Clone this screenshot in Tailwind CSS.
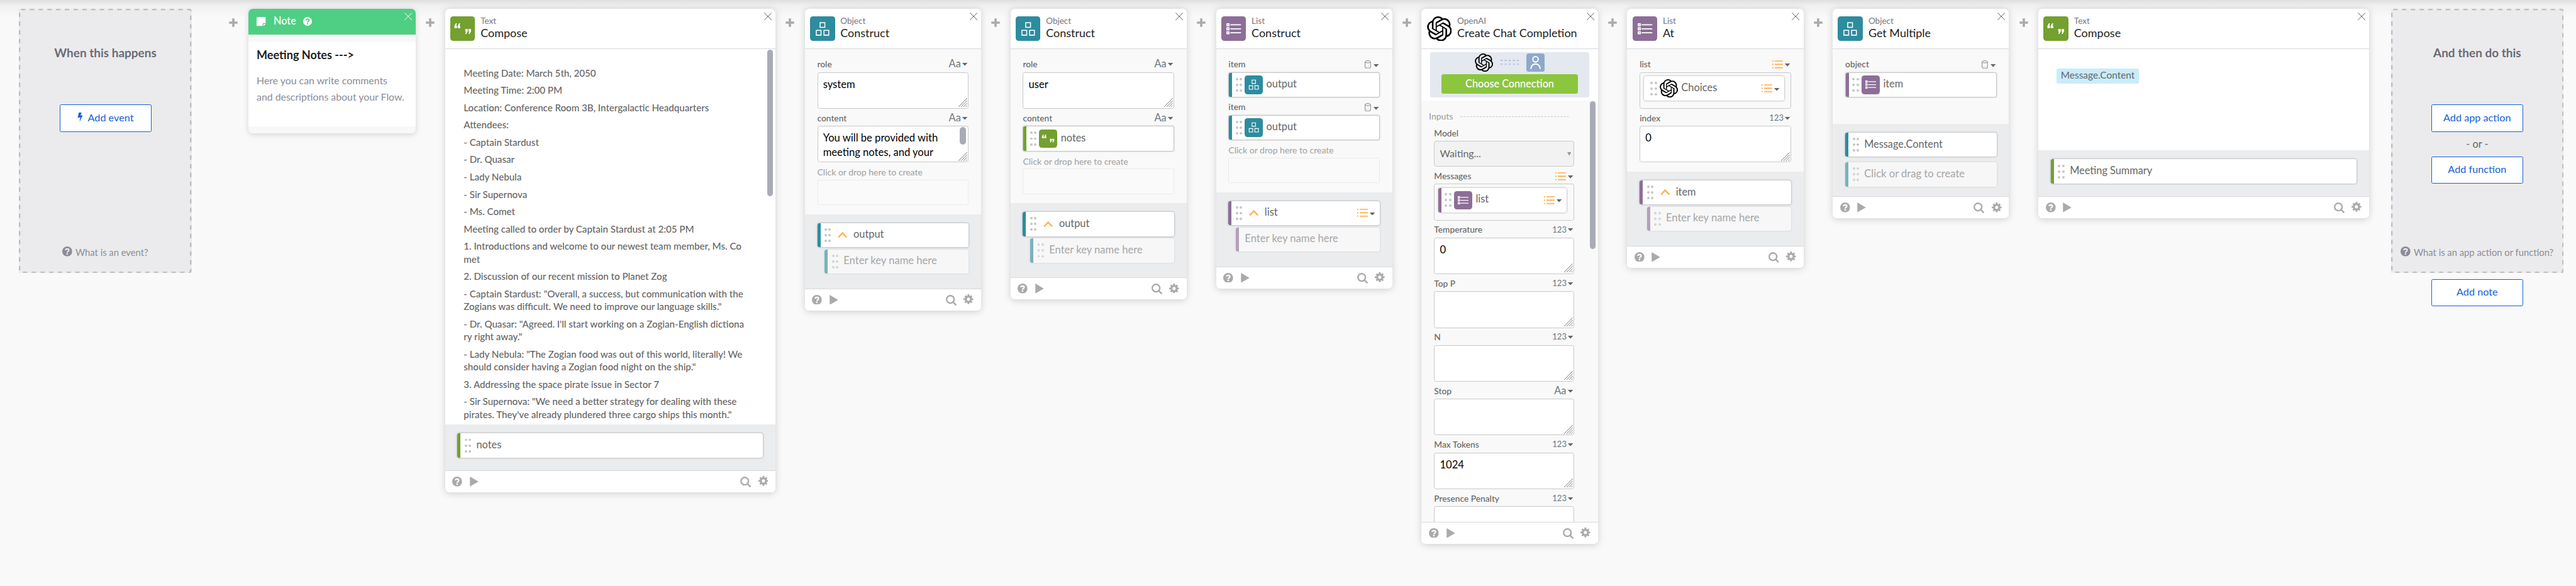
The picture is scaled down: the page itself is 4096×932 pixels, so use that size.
<!DOCTYPE html>
<html lang="en">
<head>
<meta charset="utf-8">
<title>Flow editor</title>
<script src="https://cdn.jsdelivr.net/npm/@tailwindcss/browser@4"></script>
</head>
<body class="bg-[#f9f9f9] overflow-hidden">

<svg class="hidden">
  <symbol id="plus" viewBox="0 0 12 12"><path d="M6 1.8v8.4M1.8 6h8.4" stroke="currentColor" stroke-width="3.1" stroke-linecap="square" stroke-linejoin="round"/></symbol>
  <symbol id="x" viewBox="0 0 11 11"><path d="M.3.3l10.4 10.4M10.7.3L.3 10.7" stroke="currentColor" stroke-width=".85"/></symbol>
  <symbol id="help" viewBox="0 0 16 16"><circle cx="8" cy="8" r="8" fill="currentColor"/><path class="stroke-(--hole)" d="M5.3 6.1C5.5 3.2 10.7 3.2 10.7 6.1 10.7 8 8 8 8 9.9" fill="none" stroke-width="2.1"/><path class="stroke-(--hole)" d="M8 11v2.3" stroke-width="2.4"/></symbol>
  <symbol id="play" viewBox="0 0 12 14"><path d="M0 0l12 7L0 14z" fill="currentColor"/></symbol>
  <symbol id="search" viewBox="0 0 29 29"><circle cx="12.3" cy="12.3" r="10.2" fill="none" stroke="currentColor" stroke-width="4"/><path d="M20 20l6.8 6.8" stroke="currentColor" stroke-width="4.4" stroke-linecap="round"/></symbol>
  <symbol id="gear" viewBox="0 0 16 16"><circle cx="8" cy="8" r="4.2" fill="none" stroke="currentColor" stroke-width="3.3"/><path d="M8 0v3.4M8 12.600v3.4M0 8h3.4M12.600 8H16M2.500 2.500l2.300 2.300M11.200 11.200l2.300 2.300M13.500 2.500l-2.300 2.300M4.800 11.200l-2.300 2.300" stroke="currentColor" stroke-width="3"/></symbol>
  <symbol id="text" viewBox="0 0 34 34"><path fill="#fff" d="M5.600 16v-3.100l1.900-3.500h1.500l-.9 3.400h1V16zM10.100 16v-3.100L12 9.400h1.500l-.9 3.400h1V16zM20.300 17.300h3.500v3.100l-1.900 3.500h-1.500l.9-3.400h-1zM24.800 17.300h3.500v3.100l-1.900 3.500h-1.500l.9-3.400h-1z"/></symbol>
  <symbol id="object" viewBox="0 0 34 34"><path fill="none" stroke="#fff" stroke-width="1.300" d="M13.700 8.500h6.500v6.500h-6.500zM8.500 19.100h6.500v6.500H8.500zM19 19.100h6.500v6.500H19z"/></symbol>
  <symbol id="list" viewBox="0 0 34 34"><path fill="none" stroke="#fff" stroke-width="1.500" d="M7.700 10.100h2.700v2.700H7.700zM7.700 15.600h2.700v2.700H7.700zM7.700 21h2.700v2.700H7.700zM12.100 11.500h14.700M12.100 17h14.700M12.100 22.400h14.700"/></symbol>
  <symbol id="openai" viewBox="0 0 24 24"><path d="M22.2819 9.8211a5.9847 5.9847 0 0 0-.5157-4.9108 6.0462 6.0462 0 0 0-6.5098-2.9A6.0651 6.0651 0 0 0 4.9807 4.1818a5.9847 5.9847 0 0 0-3.9977 2.9 6.0462 6.0462 0 0 0 .7427 7.0966 5.98 5.98 0 0 0 .511 4.9107 6.051 6.051 0 0 0 6.5146 2.9001A5.9847 5.9847 0 0 0 13.2599 24a6.0557 6.0557 0 0 0 5.7718-4.2058 5.9894 5.9894 0 0 0 3.9977-2.9001 6.0557 6.0557 0 0 0-.7475-7.0729zm-9.022 12.6081a4.4755 4.4755 0 0 1-2.8764-1.0408l.1419-.0804 4.7783-2.7582a.7948.7948 0 0 0 .3927-.6813v-6.7369l2.02 1.1686a.071.071 0 0 1 .038.052v5.5826a4.504 4.504 0 0 1-4.4945 4.4944zm-9.6607-4.1254a4.4708 4.4708 0 0 1-.5346-3.0137l.142.0852 4.783 2.7582a.7712.7712 0 0 0 .7806 0l5.8428-3.3685v2.3324a.0804.0804 0 0 1-.0332.0615L9.74 19.9502a4.4992 4.4992 0 0 1-6.1408-1.6464zM2.3408 7.8956a4.485 4.485 0 0 1 2.3655-1.9728V11.6a.7664.7664 0 0 0 .3879.6765l5.8144 3.3543-2.0201 1.1685a.0757.0757 0 0 1-.071 0l-4.8303-2.7865A4.504 4.504 0 0 1 2.3408 7.872zm16.5963 3.8558L13.1038 8.364 15.1192 7.2a.0757.0757 0 0 1 .071 0l4.8303 2.7913a4.4944 4.4944 0 0 1-.6765 8.1042v-5.6772a.79.79 0 0 0-.407-.667zm2.0107-3.0231l-.142-.0852-4.7735-2.7818a.7759.7759 0 0 0-.7854 0L9.409 9.2297V6.8974a.0662.0662 0 0 1 .0284-.0615l4.8303-2.7866a4.4992 4.4992 0 0 1 6.6802 4.66zM8.3065 12.863l-2.02-1.1638a.0804.0804 0 0 1-.038-.0567V6.0742a4.4992 4.4992 0 0 1 7.3757-3.4537l-.142.0805L8.704 5.459a.7948.7948 0 0 0-.3927.6813zm1.0976-2.3654l2.602-1.4998 2.6069 1.4998v2.9994l-2.5974 1.4997-2.6067-1.4997Z"/></symbol>
  <symbol id="caret" viewBox="0 0 7 4"><path d="M0 0h7L3.500 4z" fill="#666"/></symbol>
  <symbol id="lines" viewBox="0 0 29 22"><path d="M8 1.700h20M8 11h20M8 20.300h20" stroke="#ffab40" stroke-width="2.900" stroke-linecap="round"/><path d="M0 1.700h3M0 11h3M0 20.300h3" stroke="#ffab40" stroke-width="3.400"/></symbol>
  <symbol id="cylinder" viewBox="0 0 17 23"><g fill="none" stroke="#6b7883" stroke-width="1.500"><ellipse cx="8.500" cy="4" rx="7.500" ry="3"/><path d="M1 4v15c0 4 15 4 15 0V4"/><path d="M2 19c2-2.300 11-2.300 13 0" stroke-dasharray="1.200 1.200" stroke-width=".9"/></g></symbol>
  <symbol id="chevron" viewBox="0 0 13 8"><path d="M.9 7.200L6.500 1.300l5.600 5.900" fill="none" stroke="#ffab40" stroke-width="1.900"/></symbol>
  <symbol id="grip" viewBox="0 0 12 12"><path d="M0 12L11.800.2M3.300 12l8.500-8.500M6.600 12l5.200-5.200M9.800 12l2-2" stroke="#6f6f6f" stroke-width=".8"/></symbol>
  <symbol id="person" viewBox="0 0 25 25"><rect width="25" height="25" rx="3.500" fill="#8fa9ca"/><g fill="none" stroke="#fff" stroke-width="1.700"><circle cx="12.500" cy="8" r="3.700"/><path d="M6.200 21.300c0-9.300 12.600-9.300 12.600 0"/></g></symbol>
  <symbol id="sheet" viewBox="0 0 12 12"><path d="M1 0h10q1 0 1 1v7H9Q8 8 8 9v3H1q-1 0-1-1V1q0-1 1-1z" fill="#fff"/><path d="M9 9h3L9 12z" fill="#fff"/></symbol>
  <symbol id="bolt" viewBox="0 0 15 26"><path d="M4 0h7.500L8.600 8.200 15 6.800 6 26 8.200 13 1 14.600z" fill="currentColor"/></symbol>
</svg>

<div id="page" class="relative h-[798px] w-[3508px] overflow-hidden font-['Lato',sans-serif] text-[14px] text-[#666] whitespace-nowrap [zoom:1.16762]"></div>

<script>
const icon = (id, cls) => `<svg class="shrink-0 ${cls}"><use href="#${id}"/></svg>`;

const TILE = { text: 'bg-[#73a02f]', object: 'bg-[#2d8c9e]', list: 'bg-[#8d6e97]', openai: 'text-black' };
const bigTile = k => `<div class="size-[34px] shrink-0 rounded-[4px] ${TILE[k]}">${icon(k, 'block size-full')}</div>`;
const tile = k => `<div class="size-[25px] shrink-0 rounded-[4px] ${TILE[k]}">${icon(k, 'block size-full')}</div>`;

const dot = '<i class="size-[3.4px] rounded-full bg-[#c6c6c6]"></i>';
const dots = `<div class="grid w-[9px] shrink-0 grid-cols-2 justify-between gap-x-[2.200px] gap-y-[4.400px]">${dot.repeat(6)}</div>`;

const types = {
  text: '<span class="pb-[2px] text-[14px] text-[#6b7883] font-[\'Open_Sans\'] leading-none">Aa</span>' + icon('caret', 'ml-[2px] h-[4px] w-[7px]'),
  number: '<span class="pb-[1px] text-[11.200px] text-[#6b7883] font-[\'DejaVu_Sans_Mono\'] leading-none">123</span>' + icon('caret', 'ml-[1.500px] h-[4px] w-[7px]'),
  list: icon('lines', 'h-[11px] w-[14.5px]') + icon('caret', 'ml-[2.500px] mt-[2px] h-[4px] w-[7px]'),
  object: icon('cylinder', 'h-[11.5px] w-[8.5px]') + icon('caret', 'ml-[3.500px] mt-[3px] h-[4px] w-[7px]'),
};

const label = (t, type) => `<div class="flex h-[23.200px] items-center justify-between pt-[2.500px] pr-[1.500px]">
  <span class="text-[11.800px] font-medium">${t}</span>${type ? `<span class="flex items-center">${types[type]}</span>` : ''}</div>`;

const area = (t, scroll) => `<div class="relative h-[50px] overflow-hidden rounded-[3px] border border-[#c8c8c8] bg-white px-[7px] pt-[6px] text-[14.200px] leading-[19.500px] text-black">${t}
  ${scroll ? '<div class="absolute right-[3px] top-[1px] h-[24px] w-[8px] rounded-full bg-[#a9acb5]"></div>' : ''}
  ${icon('grip', 'absolute bottom-[1.500px] right-[1px] size-[12px]')}</div>`;

const BAR = { text: 'border-l-[#73a02f]', object: 'border-l-[#2d8c9e]', list: 'border-l-[#8d6e97]', none: 'border-l-white' };

const field = (bar, k, t) => `<div class="h-[35px] rounded-[3px] border border-[#c4c4c4] bg-white shadow-[0_0_2px_#0003]">
  <div class="flex h-full items-center rounded-l-[2px] border-l-[5px] pl-[4.500px] ${BAR[bar]}">${dots}<div class="ml-[3.500px]">${tile(k)}</div><span class="ml-[4.500px] pb-[3px] text-[14px]">${t}</span></div></div>`;

const create = () => `<div class="flex h-[23.200px] items-center pt-[3px] text-[12px] text-[#a0a0a0]">Click or drop here to create</div>
  <div class="h-[35px] rounded-[2px] border border-[#ebebeb] bg-[#fafafa]"></div>`;

const pill = (bar, inner, extra = '') => `<div class="flex h-[33px] items-center rounded-[3px] border-l-[5px] bg-white pl-[5.500px] shadow-[0_0_2.500px_#0006] ${BAR[bar]} ${extra}">${inner}</div>`;
const ghost = (bar, t, extra = '', grip = true) => `<div class="flex h-[33px] items-center rounded-[3px] border-l-[5px] bg-white pl-[5.500px] opacity-60 shadow-[0_0_2.500px_#0003] ${BAR[bar]} ${extra}">${grip ? dots : ''}<span class="pb-[2px] text-[14.200px] text-[#777] ${grip ? 'ml-[7px]' : 'ml-[2.500px]'}">${t}</span></div>`;
const plain = (bar, t) => pill(bar, `${dots}<span class="ml-[7px] pb-[2px] text-[14px]">${t}</span>`);
const parent = (bar, t, type) => pill(bar, `${dots}${icon('chevron', 'ml-[9px] h-[8px] w-[13px]')}<span class="ml-[8.500px] pb-[2px] text-[14px]">${t}</span>${type ? `<span class="ml-auto mr-[7px] flex items-center">${types[type]}</span>` : ''}`);
const nested = (k, t) => `<div class="h-[50px] rounded-[3px] border border-[#c8c8c8] p-[5px]"><div class="${k === 'list' ? 'w-[175px]' : 'w-[191px]'}">
  ${pill(k === 'list' ? 'list' : 'none', `<div class="ml-[-1px] flex items-center">${dots}</div><div class="ml-[3.500px]">${tile(k)}</div><span class="ml-[4.500px] pb-[3px] text-[14.100px]">${t}</span><span class="ml-auto mr-[7px] flex items-center">${types.list}</span>`)}</div></div>`;

const outputs = (html, pad) => `<div class="bg-[#ebecee] px-[17px] pt-[12px] ${pad}">${html}</div>`;
const footer = `<div class="relative flex h-[30px] shrink-0 items-center rounded-b-[6px] border-t border-[#d7d8dd] bg-white pl-[10px] pr-[10px] text-[#aaa] [--hole:#fff]">
  ${icon('help', 'size-[13.500px]')}${icon('play', 'ml-[10px] h-[13.500px] w-[12px]')}
  ${icon('search', 'ml-auto mt-[1px] size-[14.500px]')}${icon('gear', 'ml-[10px] mt-[-1px] size-[13.500px]')}</div>`;

const card = (k, sub, title, w, body) => `<section class="flex shrink-0 flex-col rounded-[6px] bg-white shadow-[0_1px_10px_#0000002b] ${w}">
  <header class="relative flex h-[55px] shrink-0 border-b border-[#d7d8dd] pl-[7px] pt-[10px]">
    ${bigTile(k)}
    <div class="-mt-[0.600px] ml-[7.500px]"><div class="text-[11.600px] leading-[15px] text-[#777582]">${sub}</div><div class="text-[15.400px] leading-[17px] text-[#1e1e22]">${title}</div></div>
    ${icon('x', 'absolute right-[5px] top-[5px] size-[10.500px] text-[#555]')}
  </header>${body}${footer}</section>`;

const plus = `<div class="flex w-10 shrink-0 justify-center pt-[13px] text-[#aaa]">${icon('plus', 'size-[12px]')}</div>`;
const form = html => `<div class="bg-[#f9f9f9] px-[17px] pb-[12.200px] pt-[8px]">${html}</div>`;

const dashed = html => `<div class="relative flex h-[360px] w-[235px] flex-col items-center bg-[#ebebed]">
  <svg class="absolute inset-0 size-full"><rect x="1" y="1" width="233" height="358" rx="2" fill="none" stroke="#bdbdbd" stroke-width="2" stroke-dasharray="6 5.900"/></svg>${html}</div>`;
const button = (t, extra = '') => `<div class="flex h-[37px] w-[125px] items-center justify-center rounded-[2px] border border-[#1560d8] bg-white pb-[2px] text-[13.900px] text-[#1560d8] ${extra}">${t}</div>`;
const helpLine = t => `<div class="absolute inset-x-0 top-[322px] flex items-center justify-center text-[12.650px] text-[#8c8c96] [--hole:#ebebed]">${icon('help', 'mr-[4px] mb-[2px] size-[13.500px]')}${t}</div>`;
const heading = t => `<h2 class="mt-[49px] text-[16.250px] leading-[22px] font-bold text-[#6b6b76]">${t}</h2>`;

const notes = ['Meeting Date: March 5th, 2050', 'Meeting Time: 2:00 PM', 'Location: Conference Room 3B, Intergalactic Headquarters', 'Attendees:', '- Captain Stardust', '- Dr. Quasar', '- Lady Nebula', '- Sir Supernova', '- Ms. Comet', 'Meeting called to order by Captain Stardust at 2:05 PM', '1. Introductions and welcome to our newest team member, Ms. Co<br>met', '2. Discussion of our recent mission to Planet Zog', '- Captain Stardust: "Overall, a success, but communication with the<br>Zogians was difficult. We need to improve our language skills."', '- Dr. Quasar: "Agreed. I\'ll start working on a Zogian-English dictiona<br>ry right away."', '- Lady Nebula: "The Zogian food was out of this world, literally! We<br>should consider having a Zogian food night on the ship."', '3. Addressing the space pirate issue in Sector 7', '- Sir Supernova: "We need a better strategy for dealing with these<br>pirates. They\'ve already plundered three cargo ships this month."'];

document.getElementById('page').innerHTML = `
<div class="absolute inset-x-0 top-0 h-[24px] bg-linear-to-b from-[#dedede] via-[#f0f0f0] via-30% to-[#f9f9f9]"></div>
<main class="relative flex items-start pl-[26px] pt-[12px]">
  ${dashed(`${heading('When this happens')}${button(icon('bolt', 'mr-[7px] h-[13px] w-[7.500px]') + 'Add event', 'mt-[59.500px]')}${helpLine('What is an event?')}`)}
  <div class="w-[37px] shrink-0"></div>${plus}
  <section class="h-[170px] w-[228px] shrink-0 overflow-hidden rounded-[6px] bg-[#f8f8f8] shadow-[0_1px_8px_#00000026]">
    <header class="relative flex h-[35px] items-center bg-[#4ecf84] pl-[11.500px] text-white [--hole:#4ecf84]">${icon('sheet', 'size-[12.500px]')}
      <span class="ml-[10.500px] pb-[2px] text-[14px] font-medium">Note</span>${icon('help', 'mb-[1px] ml-[10px] size-[12px]')}
      ${icon('x', 'absolute right-[5px] top-[5px] size-[10.500px]')}</header>
    <div class="mt-[10px] h-[115px] bg-white px-[11.500px] pt-[8px]">
      <h3 class="text-[15.500px] leading-[20px] font-bold text-[#1e1e20]">Meeting Notes ---&gt;</h3>
      <p class="mt-[13.500px] text-[13.600px] leading-[22px] text-[#8c8c96]">Here you can write comments<br>and descriptions about your Flow.</p>
    </div>
  </section>
  ${plus}
  ${card('text', 'Text', 'Compose', 'w-[450px]', `<div class="relative h-[511.400px] bg-white pl-[25.500px] pt-[23.700px] text-[12.950px] leading-[17.600px] font-medium">
    ${notes.map(n => `<p class="mb-[5.970px]">${n}</p>`).join('')}
    <div class="absolute right-[3px] top-[1px] h-[199px] w-[8px] rounded-full bg-[#a9acb5]"></div></div>
    ${outputs(plain('text', 'notes'), 'pb-[17px]')}`)}
  ${plus}
  ${card('object', 'Object', 'Construct', 'w-[240px]', form(label('role', 'text') + area('system') + label('content', 'text') + area('You will be provided with<br>meeting notes, and your', true) + create())
    + outputs(parent('object', 'output') + ghost('object', 'Enter key name here', 'mt-[3px] ml-[10px]'), 'pb-[20px]'))}
  ${plus}
  ${card('object', 'Object', 'Construct', 'w-[240px]', form(label('role', 'text') + area('user') + label('content', 'text') + field('text', 'text', 'notes') + create())
    + outputs(parent('object', 'output') + ghost('object', 'Enter key name here', 'mt-[3px] ml-[10px]'), 'pb-[20px]'))}
  ${plus}
  ${card('list', 'List', 'Construct', 'w-[240px]', form(label('item', 'object') + field('object', 'object', 'output') + label('item', 'object') + field('object', 'object', 'output') + create())
    + outputs(parent('list', 'list', 'list') + ghost('list', 'Enter key name here', 'mt-[3px] ml-[10px]', false), 'pb-[20px]'))}
  ${plus}
  ${card('openai', 'OpenAI', 'Create Chat Completion', 'w-[240px]', `
    <div class="mx-[12px] mt-[4px] flex h-[62px] shrink-0 flex-col items-center rounded-[3px] bg-[#e4e8ef] pt-[1.500px]">
      <div class="flex items-center">${tile('openai')}<svg class="mx-[10px] h-[7px] w-[25px]"><path d="M0 1h25M0 6h25" stroke="#95a8cf" stroke-dasharray="2.800 2.750"/></svg>${icon('person', 'size-[25px]')}</div>
      <div class="mt-[4px] flex h-[26px] w-[186px] items-center justify-center rounded-[3px] bg-[#8cc63f] pb-[1.500px] text-[13.900px] font-medium text-white">Choose Connection</div>
    </div>
    <div class="relative mt-[4px] h-[573.500px] overflow-hidden bg-[#f9f9f9] pl-[17px] pr-[32.500px] pt-[12px]">
      <div class="-ml-[7px] flex h-[20px] items-center text-[12px] text-[#999]"><span class="pb-[2px]">Inputs</span><svg class="ml-[10px] h-[1px] w-[149px]"><path d="M0 .5h149" stroke="#c4c4c4" stroke-dasharray="2.600 1.800"/></svg></div>
      ${label('Model')}
      <div class="flex h-[35px] items-center justify-between rounded-[3px] border border-[#c8c8c8] bg-[#f2f2f2] pl-[7px] pr-[3px] text-[13.600px]"><span class="pb-[2px]">Waiting...</span><svg class="h-[5px] w-[5.500px]" viewBox="0 0 11 10"><path d="M0 0h11L5.500 10z" fill="#999"/></svg></div>
      ${label('Messages', 'list')}${nested('list', 'list')}
      ${label('Temperature', 'number')}${area('0')}
      ${label('Top P', 'number')}${area('')}
      ${label('N', 'number')}${area('')}
      ${label('Stop', 'text')}${area('')}
      ${label('Max Tokens', 'number')}${area('1024')}
      ${label('Presence Penalty', 'number')}${area('')}
      <div class="absolute right-[3px] top-[1px] h-[201px] w-[8px] rounded-full bg-[#a9acb5]"></div>
    </div>`)}
  ${plus}
  ${card('list', 'List', 'At', 'w-[240px]', form(label('list', 'list') + nested('openai', 'Choices') + label('index', 'number') + area('0'))
    + outputs(parent('list', 'item') + ghost('list', 'Enter key name here', 'mt-[3px] ml-[10px]'), 'pb-[20px]'))}
  ${plus}
  ${card('object', 'Object', 'Get Multiple', 'w-[240px]', `<div class="h-[101.500px] bg-[#f9f9f9] px-[17px] pt-[8px]">${label('object', 'object')}${field('list', 'list', 'item')}</div>`
    + outputs(plain('object', 'Message.Content') + ghost('object', 'Click or drag to create', 'mt-[7.500px]'), 'pb-[13.500px]'))}
  ${plus}
  ${card('text', 'Text', 'Compose', 'w-[450px]', `<div class="h-[138px] bg-white pl-[25px] pt-[25px]"><span class="inline-flex h-[20px] items-center rounded-[2px] bg-[#c9ecfb] px-[5.500px] pb-[1.500px] text-[13.200px]">Message.Content</span></div>
    ${outputs(plain('text', 'Meeting Summary'), 'pb-[17px]')}`)}
  <div class="ml-[30px] flex shrink-0 flex-col items-center">
    ${dashed(`${heading('And then do this')}${button('Add app action', 'mt-[59.500px]')}<div class="flex h-[34px] items-center text-[14px]">- or -</div>${button('Add function')}${helpLine('What is an app action or function?')}`)}
    ${button('Add note', 'mt-[8px]')}
  </div>
</main>`;
</script>
</body>
</html>
